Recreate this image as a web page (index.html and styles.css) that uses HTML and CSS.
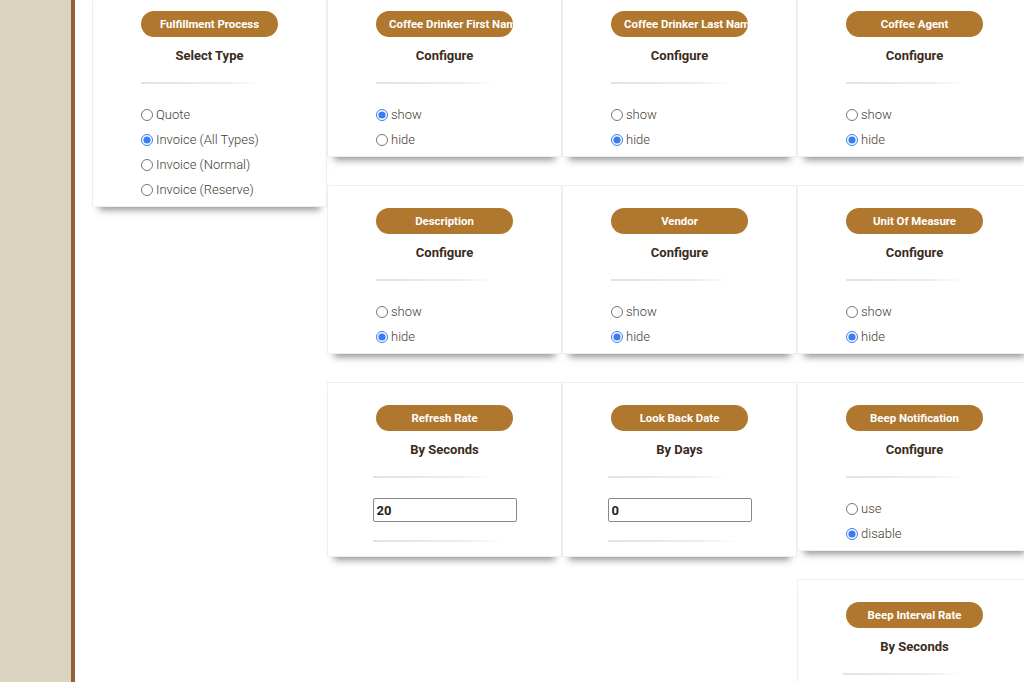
FILE: index.html
```html
<!DOCTYPE html>
<html>
<head>
<meta charset="utf-8">
<title>Settings</title>
<link rel="stylesheet" href="styles.css">
</head>
<body>
<div class="page">
  <aside class="sidebar"></aside>
  <main class="main">
    <div class="col">
      <section class="card">
        <div class="pill">Fulfillment Process</div>
        <h3 class="heading">Select Type</h3>
        <div class="body">
          <div class="sep"></div>
          <div class="options">
            <label class="opt"><input type="radio" name="ff"> Quote</label>
            <label class="opt"><input type="radio" name="ff" checked> Invoice (All Types)</label>
            <label class="opt"><input type="radio" name="ff"> Invoice (Normal)</label>
            <label class="opt"><input type="radio" name="ff"> Invoice (Reserve)</label>
          </div>
        </div>
      </section>
    </div>

    <div class="col">
      <section class="card">
        <div class="pill">Coffee Drinker First Name</div>
        <h3 class="heading">Configure</h3>
        <div class="body">
          <div class="sep"></div>
          <div class="options">
            <label class="opt"><input type="radio" name="fn" checked> show</label>
            <label class="opt"><input type="radio" name="fn"> hide</label>
          </div>
        </div>
      </section>
      <section class="card">
        <div class="pill">Description</div>
        <h3 class="heading">Configure</h3>
        <div class="body">
          <div class="sep"></div>
          <div class="options">
            <label class="opt"><input type="radio" name="ds"> show</label>
            <label class="opt"><input type="radio" name="ds" checked> hide</label>
          </div>
        </div>
      </section>
      <section class="card">
        <div class="pill">Refresh Rate</div>
        <h3 class="heading">By Seconds</h3>
        <div class="body body-wide">
          <div class="sep"></div>
          <input class="field" type="text" value="20">
          <div class="sep sep-bottom"></div>
        </div>
      </section>
    </div>

    <div class="col">
      <section class="card">
        <div class="pill">Coffee Drinker Last Name</div>
        <h3 class="heading">Configure</h3>
        <div class="body">
          <div class="sep"></div>
          <div class="options">
            <label class="opt"><input type="radio" name="ln"> show</label>
            <label class="opt"><input type="radio" name="ln" checked> hide</label>
          </div>
        </div>
      </section>
      <section class="card">
        <div class="pill">Vendor</div>
        <h3 class="heading">Configure</h3>
        <div class="body">
          <div class="sep"></div>
          <div class="options">
            <label class="opt"><input type="radio" name="vd"> show</label>
            <label class="opt"><input type="radio" name="vd" checked> hide</label>
          </div>
        </div>
      </section>
      <section class="card">
        <div class="pill">Look Back Date</div>
        <h3 class="heading">By Days</h3>
        <div class="body body-wide">
          <div class="sep"></div>
          <input class="field" type="text" value="0">
          <div class="sep sep-bottom"></div>
        </div>
      </section>
    </div>

    <div class="col">
      <section class="card">
        <div class="pill">Coffee Agent</div>
        <h3 class="heading">Configure</h3>
        <div class="body">
          <div class="sep"></div>
          <div class="options">
            <label class="opt"><input type="radio" name="ag"> show</label>
            <label class="opt"><input type="radio" name="ag" checked> hide</label>
          </div>
        </div>
      </section>
      <section class="card">
        <div class="pill">Unit Of Measure</div>
        <h3 class="heading">Configure</h3>
        <div class="body">
          <div class="sep"></div>
          <div class="options">
            <label class="opt"><input type="radio" name="um"> show</label>
            <label class="opt"><input type="radio" name="um" checked> hide</label>
          </div>
        </div>
      </section>
      <section class="card">
        <div class="pill">Beep Notification</div>
        <h3 class="heading">Configure</h3>
        <div class="body">
          <div class="sep"></div>
          <div class="options">
            <label class="opt"><input type="radio" name="bp"> use</label>
            <label class="opt"><input type="radio" name="bp" checked> disable</label>
          </div>
        </div>
      </section>
      <section class="card">
        <div class="pill">Beep Interval Rate</div>
        <h3 class="heading">By Seconds</h3>
        <div class="body body-wide">
          <div class="sep"></div>
          <input class="field" type="text" value="3">
          <div class="sep sep-bottom"></div>
        </div>
      </section>
    </div>
  </main>
</div>
</body>
</html>
```

FILE: styles.css
```css
html, body {
  margin: 0;
  padding: 0;
  background: #ffffff;
  height: 100%;
  overflow: hidden;
}

body {
  font-family: Roboto, "Liberation Sans", Arial, sans-serif;
}

.page {
  display: flex;
  align-items: stretch;
  min-height: 100%;
}

.sidebar {
  flex: 0 0 71px;
  background: #dad4c0;
  border-right: 4px solid #8e6239;
}

.main {
  display: flex;
  align-items: flex-start;
  padding-left: 17px;
  margin-top: -26px;
}

.col {
  display: flex;
  flex-direction: column;
  flex: 0 0 235px;
  width: 235px;
}

.card {
  box-sizing: border-box;
  margin: 14px 0;
  padding: 22px 0 4px;
  border: 1px solid #efefef;
  background: #ffffff;
  box-shadow: 0 10px 7px -7px rgba(60, 60, 60, 0.55);
}

.pill {
  box-sizing: border-box;
  width: 137px;
  height: 26px;
  margin: 0 auto;
  padding: 0 13px;
  border-radius: 13px;
  background: #b0782f;
  color: #ffffff;
  font-size: 11.4px;
  font-weight: 700;
  line-height: 26px;
  text-align: center;
  white-space: nowrap;
  overflow: hidden;
}

.heading {
  margin: 10px 0 0;
  font-size: 13px;
  font-weight: 700;
  line-height: 18px;
  color: #3a2b1d;
  text-align: center;
}

.body {
  width: 137px;
  margin: 17px auto 0;
}

.body-wide {
  width: 144px;
}

.sep {
  width: 120px;
  height: 2px;
  background: linear-gradient(to right, #e2e2e2, #ededed 70%, rgba(255, 255, 255, 0));
}

.sep-bottom {
  width: 130px;
  margin: 18px 0 10px;
}

.options {
  margin-top: 18px;
  display: flex;
  flex-direction: column;
}

.opt {
  display: flex;
  align-items: center;
  height: 25px;
  font-size: 13px;
  font-weight: 300;
  color: #463b31;
  white-space: nowrap;
}

.opt input {
  width: 12px;
  height: 12px;
  margin: 0 3px 0 0;
  accent-color: #3b7cf0;
}

.field {
  display: block;
  box-sizing: border-box;
  width: 144px;
  height: 24px;
  margin-top: 20px;
  padding: 0 3px;
  border: 1px solid #8a8a8a;
  border-radius: 2px;
  font-family: Roboto, "Liberation Sans", Arial, sans-serif;
  font-size: 13px;
  font-weight: 700;
  color: #2b2218;
  background: #ffffff;
}
```
